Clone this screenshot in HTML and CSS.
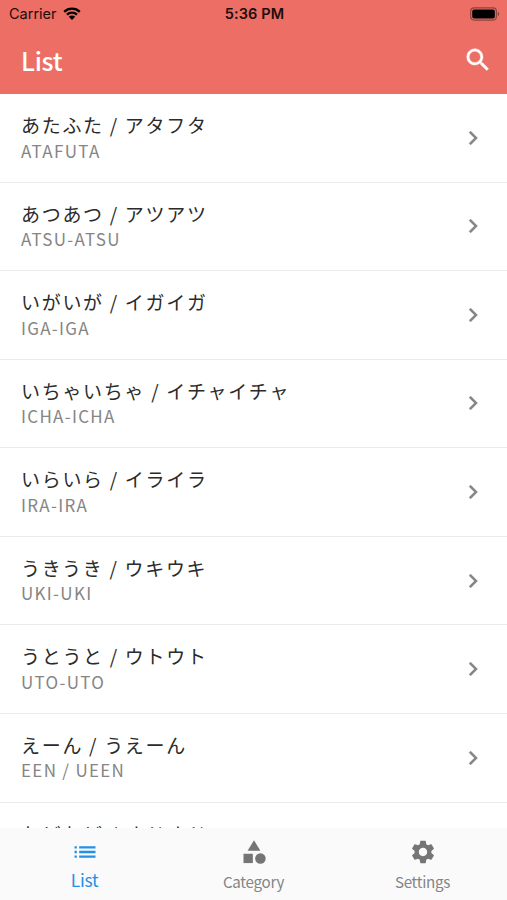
FILE: index.html
```
<!DOCTYPE html>
<html lang="ja">
<head>
    <meta charset="UTF-8">
    <meta name="viewport" content="width=device-width, initial-scale=1.0">
    <title>List</title>
    <link rel="stylesheet" href="styles.css">
</head>
<body>

    <header class="header">
        <div class="status">
            <div class="carrier">
                <span>Carrier</span>
                <svg class="wifi" viewBox="0 0 18 13">
                    <path d="M1.2 4.8a11.2 11.2 0 0 1 15.6 0M4 7.7a7.2 7.2 0 0 1 10 0" fill="none" stroke="#000" stroke-width="2.3"/>
                    <path d="M9 13L5.8 9.8a4.5 4.5 0 0 1 6.4 0z"/>
                </svg>
            </div>
            <span class="time">5:36 PM</span>
            <svg class="battery" viewBox="0 0 31 14">
                <rect x="0.7" y="0.7" width="26.6" height="12.6" rx="3.6" fill="none" stroke="#000" stroke-opacity="0.4" stroke-width="1.2"/>
                <rect x="2.3" y="2.3" width="23.4" height="9.4" rx="2"/>
                <path d="M28.8 4.8a2.6 2.6 0 0 1 0 4.4z" fill-opacity="0.5"/>
            </svg>
        </div>
        <div class="bar">
            <h1>List</h1>
            <svg class="search" viewBox="0 0 24 24">
                <path d="M15.5 14h-.79l-.28-.27C15.41 12.59 16 11.11 16 9.5 16 5.91 13.09 3 9.5 3S3 5.91 3 9.5 5.91 16 9.5 16c1.61 0 3.09-.59 4.23-1.57l.27.28v.79l5 4.99L20.49 19l-4.99-5zm-6 0C7.01 14 5 11.99 5 9.5S7.01 5 9.5 5 14 7.01 14 9.5 11.99 14 9.5 14z"/>
            </svg>
        </div>
    </header>

    <ul class="list">
        <li class="row">
            <div><p class="kana">あたふた / アタフタ</p><p class="romaji">ATAFUTA</p></div>
            <svg class="chevron" viewBox="0 0 24 24"><path d="M10 6L8.59 7.41 13.17 12l-4.58 4.59L10 18l6-6z"/></svg>
        </li>
        <li class="row">
            <div><p class="kana">あつあつ / アツアツ</p><p class="romaji">ATSU-ATSU</p></div>
            <svg class="chevron" viewBox="0 0 24 24"><path d="M10 6L8.59 7.41 13.17 12l-4.58 4.59L10 18l6-6z"/></svg>
        </li>
        <li class="row">
            <div><p class="kana">いがいが / イガイガ</p><p class="romaji">IGA-IGA</p></div>
            <svg class="chevron" viewBox="0 0 24 24"><path d="M10 6L8.59 7.41 13.17 12l-4.58 4.59L10 18l6-6z"/></svg>
        </li>
        <li class="row">
            <div><p class="kana">いちゃいちゃ / イチャイチャ</p><p class="romaji">ICHA-ICHA</p></div>
            <svg class="chevron" viewBox="0 0 24 24"><path d="M10 6L8.59 7.41 13.17 12l-4.58 4.59L10 18l6-6z"/></svg>
        </li>
        <li class="row">
            <div><p class="kana">いらいら / イライラ</p><p class="romaji">IRA-IRA</p></div>
            <svg class="chevron" viewBox="0 0 24 24"><path d="M10 6L8.59 7.41 13.17 12l-4.58 4.59L10 18l6-6z"/></svg>
        </li>
        <li class="row">
            <div><p class="kana">うきうき / ウキウキ</p><p class="romaji">UKI-UKI</p></div>
            <svg class="chevron" viewBox="0 0 24 24"><path d="M10 6L8.59 7.41 13.17 12l-4.58 4.59L10 18l6-6z"/></svg>
        </li>
        <li class="row">
            <div><p class="kana">うとうと / ウトウト</p><p class="romaji">UTO-UTO</p></div>
            <svg class="chevron" viewBox="0 0 24 24"><path d="M10 6L8.59 7.41 13.17 12l-4.58 4.59L10 18l6-6z"/></svg>
        </li>
        <li class="row">
            <div><p class="kana">えーん / うえーん</p><p class="romaji">EEN / UEEN</p></div>
            <svg class="chevron" viewBox="0 0 24 24"><path d="M10 6L8.59 7.41 13.17 12l-4.58 4.59L10 18l6-6z"/></svg>
        </li>
        <li class="row">
            <div><p class="kana">おどおど / オドオド</p></div>
        </li>
    </ul>

    <nav class="tabs">
        <a class="tab active">
            <svg viewBox="0 0 24 24"><path d="M3 13h2v-2H3v2zm0 4h2v-2H3v2zm0-8h2V7H3v2zm4 4h14v-2H7v2zm0 4h14v-2H7v2zM7 7v2h14V7H7z"/></svg>
            <span>List</span>
        </a>
        <a class="tab">
            <svg viewBox="0 0 24 24"><path d="M12 2l-5.500 9h11z"/><circle cx="17.5" cy="17.500" r="4.500"/><path d="M3 13.500h8v8H3z"/></svg>
            <span>Category</span>
        </a>
        <a class="tab">
            <svg viewBox="0 0 24 24"><path d="M19.140 12.940c.04-.3.06-.61.06-.94 0-.32-.02-.64-.07-.94l2.030-1.580c.18-.14.23-.41.12-.61l-1.920-3.320c-.12-.22-.37-.29-.59-.22l-2.390.96c-.5-.38-1.030-.7-1.620-.94l-.36-2.540c-.04-.24-.24-.41-.48-.41h-3.840c-.24 0-.43.17-.47.41l-.36 2.540c-.59.24-1.130.57-1.620.94l-2.390-.96c-.22-.08-.47 0-.59.22L2.740 8.870c-.12.21-.08.47.12.61l2.030 1.580c-.05.3-.09.63-.09.94s.02.64.07.94l-2.030 1.580c-.18.14-.23.41-.12.61l1.920 3.320c.12.22.37.29.59.22l2.390-.96c.5.38 1.030.7 1.620.94l.36 2.540c.05.24.24.41.48.41h3.840c.24 0 .44-.17.47-.41l.36-2.540c.59-.24 1.130-.56 1.620-.94l2.390.96c.22.08.47 0 .59-.22l1.920-3.320c.12-.22.07-.47-.12-.61l-2.010-1.580zM12 15.600c-1.980 0-3.600-1.620-3.600-3.600s1.620-3.600 3.600-3.600 3.600 1.620 3.600 3.600-1.620 3.600-3.600 3.600z"/></svg>
            <span>Settings</span>
        </a>
    </nav>

</body>
</html>
```
FILE: styles.css
```
*{
    margin: 0;
    padding: 0;
    box-sizing: border-box;
}
:root {
    --pr-cl: #ec6e65;
    --ac-cl: #2590e4;
    --gr-cl: #757575;
}

body{
    height: 100vh;
    display: flex;
    flex-direction: column;
    overflow: hidden;
    background-color: #fff;
    font-family: "Noto Sans CJK JP", sans-serif;
}

.header{
    height: 94px;
    flex: none;
    background-color: var(--pr-cl);
}
.status{
    height: 27px;
    padding: 0 7px 0 9px;
    display: grid;
    grid-template-columns: 1fr auto 1fr;
    align-items: center;
    font-family: Inter, sans-serif;
    font-size: 14.5px;
    color: #200d0c;
}
.carrier{
    display: flex;
    align-items: center;
    gap: 6px;
}
.wifi{
    width: 18px;
    height: 13px;
}
.time{
    font-weight: 600;
    letter-spacing: 0.1px;
}
.battery{
    width: 30px;
    height: 14px;
    justify-self: end;
}
.bar{
    height: 66px;
    padding: 0 14px 0 21px;
    display: flex;
    align-items: center;
    justify-content: space-between;
}
.bar h1{
    font-size: 25px;
    font-weight: 500;
    line-height: 36px;
    letter-spacing: -0.3px;
    color: #fff;
}
.search{
    width: 30px;
    height: 30px;
    fill: #fff;
    stroke: #fff;
    stroke-width: 0.3;
}

.list{
    flex: 1;
    min-height: 0;
    overflow: hidden;
    list-style: none;
}
.row{
    height: 88.57px;
    padding: 17px 20px 0 21px;
    display: flex;
    justify-content: space-between;
    border-bottom: 1px solid #ebebeb;
}
.kana{
    font-size: 19px;
    line-height: 28px;
    letter-spacing: 1.7px;
    color: #2b2b2b;
}
.romaji{
    margin-top: -0.5px;
    font-size: 17px;
    line-height: 24px;
    letter-spacing: 1.3px;
    color: #858585;
}
.chevron{
    width: 28px;
    height: 28px;
    margin-top: 12.8px;
    fill: #858585;
    stroke: #858585;
    stroke-width: 0.2;
}

.tabs{
    height: 72px;
    flex: none;
    display: flex;
    background-color: #fafafa;
}
.tab{
    flex: 1;
    padding-top: 10px;
    display: flex;
    flex-direction: column;
    align-items: center;
    font-size: 15.2px;
    line-height: 24px;
    letter-spacing: -0.3px;
    color: #858585;
}
.tab svg{
    width: 28px;
    height: 28px;
    margin-bottom: 3px;
    fill: var(--gr-cl);
}
.active{
    font-size: 17.5px;
    line-height: 22px;
    color: var(--ac-cl);
}
.active svg{
    fill: var(--ac-cl);
}
```
